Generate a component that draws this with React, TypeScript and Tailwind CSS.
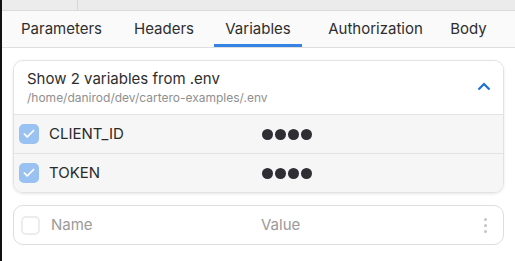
import { Check } from 'lucide-react'

const tabs = [
  { label: 'Parameters', cls: 'ml-[8px] w-[103px]' },
  { label: 'Headers', cls: 'ml-[11px] w-[80px]' },
  { label: 'Variables', cls: 'ml-[10px] w-[88px]' },
  { label: 'Authorization', cls: 'ml-[10px] w-[127px]' },
  { label: 'Body', cls: 'w-[59px]' },
]

function Dots() {
  return (
    <div className="flex gap-[2px]">
      {[0, 1, 2, 3].map((i) => (
        <span key={i} className="h-[11px] w-[11px] rounded-full bg-[#2e2e33]" />
      ))}
    </div>
  )
}

function EnvRow({ name, last }: { name: string; last?: boolean }) {
  return (
    <div className={'flex items-center bg-[#f6f6f6] ' + (last ? 'h-[38px]' : 'h-[39px] border-b border-[#e3e3e3]')}>
      <div className="ml-[5px] flex h-[20px] w-[20px] items-center justify-center rounded-[5px] bg-[#99c1f1]">
        <Check size={14} strokeWidth={3} className="text-white" />
      </div>
      <span className="ml-[10px] w-[213px] text-[15px] text-[#2a2a2a]">{name}</span>
      <Dots />
    </div>
  )
}

export default function App() {
  return (
    <div className="flex h-[261px] w-[515px] overflow-hidden bg-white font-['Inter',sans-serif]">
      <div className="w-[2px] shrink-0 bg-[#111]" />
      <div className="flex grow flex-col">
        <div className="flex h-[11px] border-b border-[#dadada] bg-[#ebebeb]">
          <div className="w-[76px] rounded-bl-[8px] border-r border-[#d6d6d6] bg-[#ececec]" />
        </div>
        <div className="flex h-[37px] border-b border-[#dedede] bg-[#fafafa] text-[15px] text-[#2e2e2e]">
          {tabs.map((t) => (
            <div
              key={t.label}
              className={
                'flex shrink-0 items-center justify-center pt-[4px] border-b-[3px] ' +
                t.cls +
                ' ' +
                (t.label === 'Variables' ? 'border-[#3584e4]' : 'border-transparent')
              }
            >
              {t.label}
            </div>
          ))}
        </div>
        <div className="flex flex-col px-[11px] pt-[12px]">
          <div className="overflow-hidden rounded-[10px] border border-[#e2e2e2] shadow-[0_1px_3px_rgba(0,0,0,0.1)]">
            <div className="flex h-[53px] items-center bg-white pl-[13px] pr-[11px]">
              <div className="flex grow flex-col">
                <span className="text-[15px] leading-[20px] text-[#2e2e2e]">Show 2 variables from .env</span>
                <span className="text-[12px] leading-[18px] text-[#8f8f8f]">/home/danirod/dev/cartero-examples/.env</span>
              </div>
              <svg width="16" height="16" viewBox="0 0 16 16" className="mt-[-1px]">
                <path d="M2.5 10.5 L8 5 L13.5 10.5" fill="none" stroke="#1c71d8" strokeWidth="2.2" />
              </svg>
            </div>
            <div className="border-t border-[#e3e3e3]">
              <EnvRow name="CLIENT_ID" />
              <EnvRow name="TOKEN" last />
            </div>
          </div>
          <div className="mt-[12px] flex h-[40px] items-center rounded-[10px] border border-[#dddddd] bg-white">
            <div className="ml-[7px] h-[19px] w-[19px] rounded-[5px] border-2 border-[#ececec]" />
            <span className="ml-[11px] w-[210px] text-[15px] text-[#9a9a9a]">Name</span>
            <span className="grow text-[15px] text-[#9a9a9a]">Value</span>
            <div className="mr-[16px] flex flex-col gap-[3px]">
              <span className="h-[3px] w-[3px] rounded-full bg-[#c4c4c4]" />
              <span className="h-[3px] w-[3px] rounded-full bg-[#c4c4c4]" />
              <span className="h-[3px] w-[3px] rounded-full bg-[#c4c4c4]" />
            </div>
          </div>
        </div>
      </div>
    </div>
  )
}
